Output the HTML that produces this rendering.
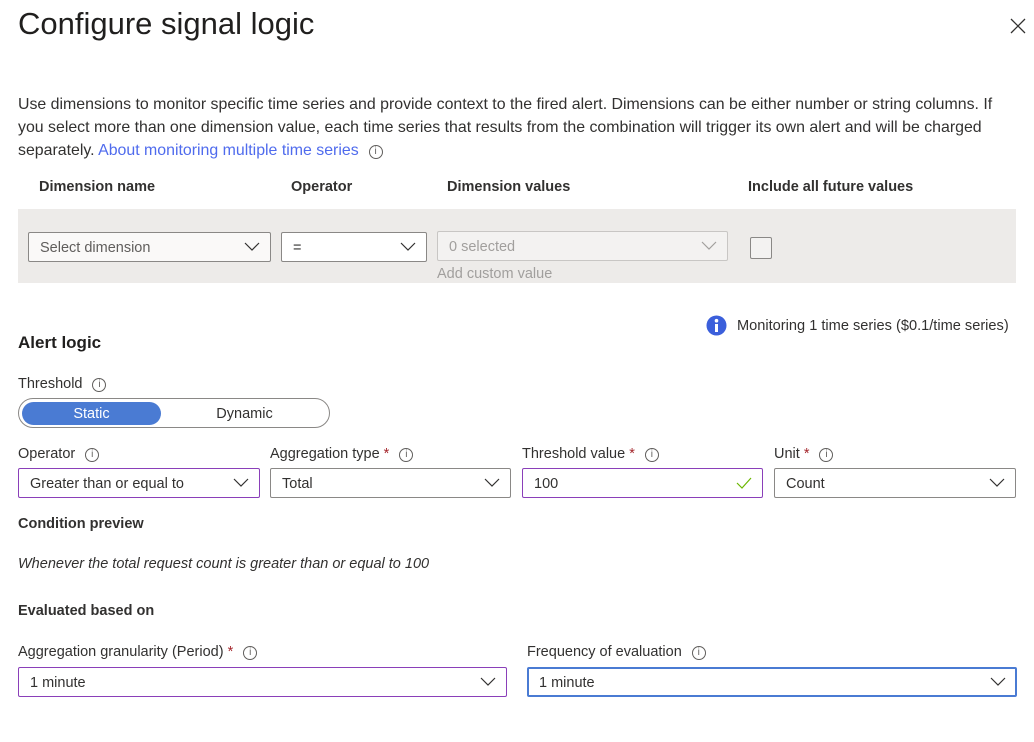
<!DOCTYPE html>
<html><head><meta charset="utf-8"><style>
*{margin:0;padding:0;box-sizing:border-box}
body{width:1034px;height:742px;background:#fff;font-family:"Liberation Sans",sans-serif;color:#323130;position:relative;overflow:hidden;font-size:14.5px}
.a{position:absolute;white-space:nowrap;line-height:20px}
.b{font-weight:bold}
.box{position:absolute;border:1px solid #8a8886;border-radius:2px;background:#fff;height:30px;line-height:31px;padding-left:11px;font-size:14.5px}
.pur{border-color:#8a3fb9}
.chev{position:absolute;right:10px;top:9px}
.i{display:inline-block;width:14px;height:14px;border:1px solid #605e5c;border-radius:50%;font-size:10px;line-height:12px;text-align:center;vertical-align:1px;margin-left:10px;color:#605e5c;font-weight:normal}
.st{color:#a4262c}
</style></head><body>
<div class="a" style="left:18px;top:4px;font-size:31px;line-height:40px;color:#201f1e">Configure signal logic</div>
<svg class="a" style="left:1010px;top:18px" width="16" height="16"><path d="M1 1L15 15M15 1L1 15" stroke="#323130" stroke-width="1.3"/></svg>
<div class="a" style="left:18px;top:93px;font-size:15.9px;line-height:23px">Use dimensions to monitor specific time series and provide context to the fired alert. Dimensions can be either number or string columns. If<br>you select more than one dimension value, each time series that results from the combination will trigger its own alert and will be charged<br>separately. <span style="color:#4f6bed">About monitoring multiple time series</span><span class="i">i</span></div>
<div class="a b" style="left:39px;top:177px">Dimension name</div>
<div class="a b" style="left:291px;top:177px">Operator</div>
<div class="a b" style="left:447px;top:177px">Dimension values</div>
<div class="a b" style="left:748px;top:177px">Include all future values</div>
<div style="position:absolute;left:18px;top:209px;width:998px;height:74px;background:#edebe9"></div>
<div class="box" style="left:28px;top:232px;width:243px;color:#605e5c;background:#faf9f8">Select dimension<svg class="chev" width="16" height="10"><path d="M1 1L8 8L15 1" fill="none" stroke="#323130" stroke-width="1.2"/></svg></div>
<div class="box" style="left:281px;top:232px;width:146px">=<svg class="chev" width="16" height="10"><path d="M1 1L8 8L15 1" fill="none" stroke="#323130" stroke-width="1.2"/></svg></div>
<div class="box" style="left:437px;top:231px;width:291px;border-color:#c8c6c4;background:#f3f2f1;color:#a19f9d">0 selected<svg class="chev" width="16" height="10"><path d="M1 1L8 8L15 1" fill="none" stroke="#a19f9d" stroke-width="1.2"/></svg></div>
<div class="a" style="left:437px;top:264px;color:#a19f9d">Add custom value</div>
<div style="position:absolute;left:750px;top:237px;width:22px;height:22px;border:1px solid #8a8886;border-radius:2px;background:#f3f2f1"></div>
<svg class="a" style="left:706px;top:315px" width="21" height="21"><circle cx="10.5" cy="10.5" r="10" fill="#3b5fdb"/><rect x="9" y="9" width="3" height="8" fill="#fff"/><circle cx="10.5" cy="5.7" r="1.8" fill="#fff"/></svg>
<div class="a" style="left:737px;top:316px;font-size:14.6px">Monitoring 1 time series ($0.1/time series)</div>
<div class="a b" style="left:18px;top:333px;font-size:17px;color:#201f1e">Alert logic</div>
<div class="a" style="left:18px;top:374px">Threshold<span class="i">i</span></div>
<div style="position:absolute;left:18px;top:398px;width:312px;height:30px;border:1px solid #8a8886;border-radius:15px"></div>
<div class="a" style="left:22px;top:402px;width:139px;height:23px;border-radius:12px;background:#4a7bd3;color:#fff;text-align:center;line-height:25px">Static</div>
<div class="a" style="left:160px;top:402px;width:169px;text-align:center;line-height:25px">Dynamic</div>
<div class="a" style="left:18px;top:444px">Operator<span class="i">i</span></div>
<div class="a" style="left:270px;top:444px">Aggregation type <span class="st">*</span><span class="i">i</span></div>
<div class="a" style="left:522px;top:444px">Threshold value <span class="st">*</span><span class="i">i</span></div>
<div class="a" style="left:774px;top:444px">Unit <span class="st">*</span><span class="i">i</span></div>
<div class="box pur" style="left:18px;top:468px;width:242px;height:30px">Greater than or equal to<svg class="chev" width="16" height="10"><path d="M1 1L8 8L15 1" fill="none" stroke="#323130" stroke-width="1.2"/></svg></div>
<div class="box" style="left:270px;top:468px;width:241px">Total<svg class="chev" width="16" height="10"><path d="M1 1L8 8L15 1" fill="none" stroke="#323130" stroke-width="1.2"/></svg></div>
<div class="box pur" style="left:522px;top:468px;width:241px">100<svg class="chev" width="16" height="12" style="top:8px"><path d="M1 6L6 11L15 1" fill="none" stroke="#6bb700" stroke-width="1.2"/></svg></div>
<div class="box" style="left:774px;top:468px;width:242px">Count<svg class="chev" width="16" height="10"><path d="M1 1L8 8L15 1" fill="none" stroke="#323130" stroke-width="1.2"/></svg></div>
<div class="a b" style="left:18px;top:514px">Condition preview</div>
<div class="a" style="left:18px;top:554px;font-style:italic">Whenever the total request count is greater than or equal to 100</div>
<div class="a b" style="left:18px;top:601px">Evaluated based on</div>
<div class="a" style="left:18px;top:642px">Aggregation granularity (Period) <span class="st">*</span><span class="i">i</span></div>
<div class="a" style="left:527px;top:642px">Frequency of evaluation<span class="i">i</span></div>
<div class="box pur" style="left:18px;top:667px;width:489px">1 minute<svg class="chev" width="16" height="10"><path d="M1 1L8 8L15 1" fill="none" stroke="#323130" stroke-width="1.2"/></svg></div>
<div class="box" style="left:527px;top:667px;width:490px;border:2px solid #4a7bd3;line-height:29px;padding-left:10px">1 minute<svg class="chev" width="16" height="10" style="right:9px;top:8px"><path d="M1 1L8 8L15 1" fill="none" stroke="#323130" stroke-width="1.2"/></svg></div>
</body></html>
